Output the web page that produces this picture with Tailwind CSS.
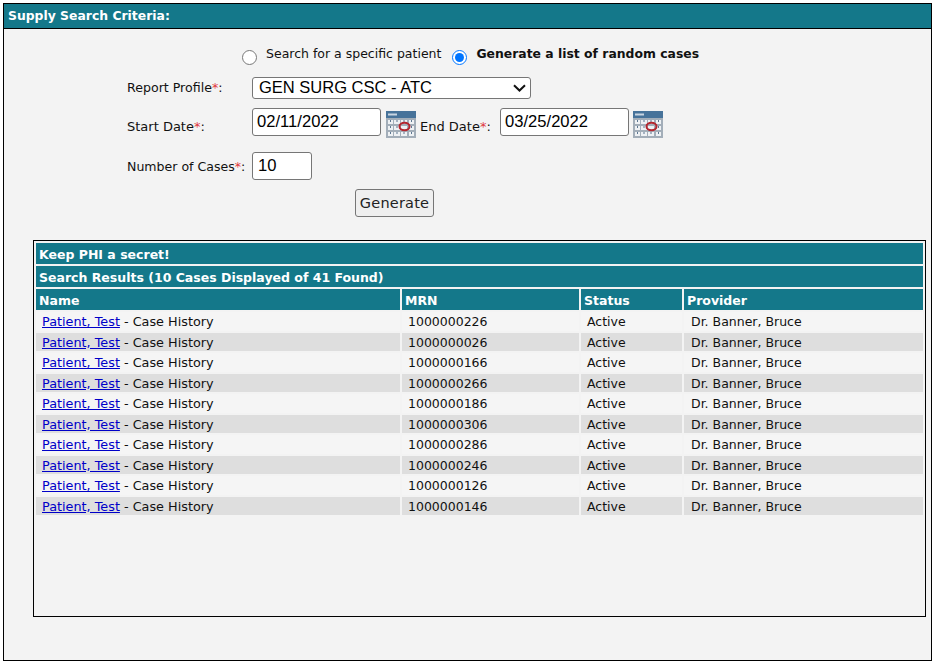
<!DOCTYPE html>
<html>
<head>
<meta charset="utf-8">
<script src="https://cdn.jsdelivr.net/npm/@tailwindcss/browser@4"></script>
</head>
<body class="bg-white font-['DejaVu_Sans',sans-serif] text-[12.5px] leading-[16px] text-[#111]">
<svg width="0" height="0" class="absolute">
  <symbol id="cal" viewBox="0 0 30 27">
    <rect width="30" height="27" fill="#a3aeb9"/>
    <rect width="30" height="7" fill="#47739a"/>
    <rect x="2" y="2.5" width="9" height="2" fill="#c9d6e2"/>
    <g fill="#eef1f4">
      <rect x="2" y="9" width="5" height="4"/><rect x="8" y="9" width="6" height="4"/><rect x="15" y="9" width="6" height="4"/><rect x="23" y="9" width="5" height="4"/>
      <rect x="2" y="15" width="5" height="4"/><rect x="8" y="15" width="6" height="4"/><rect x="15" y="15" width="6" height="4"/><rect x="23" y="15" width="5" height="4"/>
      <rect x="2" y="21" width="5" height="4"/><rect x="8" y="21" width="6" height="4"/><rect x="15" y="21" width="6" height="4"/><rect x="23" y="21" width="5" height="4"/>
    </g>
    <g fill="#5c7690">
      <rect x="4" y="9" width="1" height="2"/><rect x="10.5" y="9" width="1" height="2"/><rect x="17.5" y="9" width="1" height="2"/><rect x="25" y="9" width="1" height="2"/>
      <rect x="4" y="15" width="1" height="2"/><rect x="10.5" y="15" width="1" height="2"/><rect x="25" y="15" width="1" height="2"/>
      <rect x="4" y="21" width="1" height="2"/><rect x="10.5" y="21" width="1" height="2"/><rect x="17.5" y="21" width="1" height="2"/><rect x="25" y="21" width="1" height="2"/>
    </g>
    <ellipse cx="18.5" cy="15.5" rx="5" ry="3.8" fill="none" stroke="#b3262e" stroke-width="2"/>
  </symbol>
</svg>
<main class="ml-[3px] mt-[3px] h-[658px] w-[929px] border border-black bg-[#f3f3f3]">
  <h1 class="flex h-[25px] items-center border-b border-black bg-[#14788a] pl-[4px] text-[12.4px] font-bold text-white">Supply Search Criteria:</h1>
  <form class="h-[211px]">
    <div class="flex h-[48px] items-start pl-[238px] pt-[17px]">
      <input type="radio" name="m" class="mt-[4px] h-[15px] w-[15px]">
      <span class="ml-[9px]">Search for a specific patient</span>
      <input type="radio" name="m" checked class="ml-[11px] mt-[4px] h-[15px] w-[15px]">
      <span class="ml-[9px] text-[12.4px] font-bold">Generate a list of random cases</span>
    </div>
    <div class="flex h-[31px] items-start pl-[123px]">
      <label class="w-[125px] pt-[3px] text-[12.6px]">Report Profile<span class="text-[#e0383e]">*</span>:</label>
      <div class="relative h-[22px] w-[279px]">
        <select class="h-[22px] w-[279px] appearance-none rounded-[3px] border border-[#767676] bg-white pb-[3px] pl-[6px] font-['Liberation_Sans',sans-serif] text-[16.5px] leading-[18px] text-black">
          <option>GEN SURG CSC - ATC</option>
        </select>
        <svg class="pointer-events-none absolute right-[5px] top-[7px] h-[8px] w-[13px]" viewBox="0 0 13 8"><path d="M1 1.2 L6.5 6.5 L12 1.2" fill="none" stroke="#111" stroke-width="2"/></svg>
      </div>
    </div>
    <div class="flex h-[44px] items-start pl-[123px]">
      <label class="w-[125px] pt-[11px] text-[13px]">Start Date<span class="text-[#e0383e]">*</span>:</label>
      <input value="02/11/2022" class="h-[28px] w-[129px] rounded-[3px] border border-[#767676] bg-white pl-[4px] font-['Liberation_Sans',sans-serif] text-[16.6px] text-black">
      <svg class="ml-[5px] mt-[3px] h-[27px] w-[30px]"><use href="#cal"/></svg>
      <label class="ml-[4px] w-[80px] pt-[11px] text-[13px]">End Date<span class="text-[#e0383e]">*</span>:</label>
      <input value="03/25/2022" class="h-[28px] w-[129px] rounded-[3px] border border-[#767676] bg-white pl-[4px] font-['Liberation_Sans',sans-serif] text-[16.6px] text-black">
      <svg class="ml-[4px] mt-[3px] h-[27px] w-[30px]"><use href="#cal"/></svg>
    </div>
    <div class="flex h-[37px] items-start pl-[123px]">
      <label class="w-[125px] pt-[7px] whitespace-nowrap text-[12.55px]">Number of Cases<span class="text-[#e0383e]">*</span>:</label>
      <input value="10" class="h-[28px] w-[60px] rounded-[3px] border border-[#767676] bg-white pl-[5px] font-['Liberation_Sans',sans-serif] text-[16.6px] text-black">
    </div>
    <div class="pl-[351px]">
      <button type="button" class="h-[28px] w-[79px] rounded-[3px] border border-[#767676] bg-[#efefef] text-[14.5px] tracking-[0.2px] text-[#222]">Generate</button>
    </div>
  </form>
  <section class="ml-[29px] h-[377px] w-[893px] border border-black">
    <table class="w-[891px] table-fixed border-separate border-spacing-[2px] text-[12.5px]">
      <colgroup><col class="w-[364px]"><col class="w-[177px]"><col class="w-[101px]"><col></colgroup>
      <thead class="bg-[#14788a] text-left font-bold text-white">
        <tr class="h-[21px]"><th colspan="4" class="p-0 pl-[3px] pt-[2px] font-bold">Keep PHI a secret!</th></tr>
        <tr class="h-[21px]"><th colspan="4" class="p-0 pl-[3px] pt-[2px] font-bold">Search Results (10 Cases Displayed of 41 Found)</th></tr>
        <tr class="h-[21px]"><th class="p-0 pl-[3px] pt-[3px] font-bold">Name</th><th class="p-0 pl-[3px] pt-[3px] font-bold">MRN</th><th class="p-0 pl-[3px] pt-[3px] font-bold">Status</th><th class="p-0 pl-[3px] pt-[3px] font-bold">Provider</th></tr>
      </thead>
      <tbody>
        <tr class="h-[18.5px] bg-[#f5f5f5]"><td class="p-0 pl-[6px] pt-[2px] text-[12.8px]"><a href="#" class="text-[#0000c8] underline">Patient, Test</a> - Case History</td><td class="p-0 pl-[6px] pt-[2px]">1000000226</td><td class="p-0 pl-[6px] pt-[2px]">Active</td><td class="p-0 pl-[7px] pt-[2px]">Dr. Banner, Bruce</td></tr>
        <tr class="h-[18.5px] bg-[#dedede]"><td class="p-0 pl-[6px] pt-[2px] text-[12.8px]"><a href="#" class="text-[#0000c8] underline">Patient, Test</a> - Case History</td><td class="p-0 pl-[6px] pt-[2px]">1000000026</td><td class="p-0 pl-[6px] pt-[2px]">Active</td><td class="p-0 pl-[7px] pt-[2px]">Dr. Banner, Bruce</td></tr>
        <tr class="h-[18.5px] bg-[#f5f5f5]"><td class="p-0 pl-[6px] pt-[2px] text-[12.8px]"><a href="#" class="text-[#0000c8] underline">Patient, Test</a> - Case History</td><td class="p-0 pl-[6px] pt-[2px]">1000000166</td><td class="p-0 pl-[6px] pt-[2px]">Active</td><td class="p-0 pl-[7px] pt-[2px]">Dr. Banner, Bruce</td></tr>
        <tr class="h-[18.5px] bg-[#dedede]"><td class="p-0 pl-[6px] pt-[2px] text-[12.8px]"><a href="#" class="text-[#0000c8] underline">Patient, Test</a> - Case History</td><td class="p-0 pl-[6px] pt-[2px]">1000000266</td><td class="p-0 pl-[6px] pt-[2px]">Active</td><td class="p-0 pl-[7px] pt-[2px]">Dr. Banner, Bruce</td></tr>
        <tr class="h-[18.5px] bg-[#f5f5f5]"><td class="p-0 pl-[6px] pt-[2px] text-[12.8px]"><a href="#" class="text-[#0000c8] underline">Patient, Test</a> - Case History</td><td class="p-0 pl-[6px] pt-[2px]">1000000186</td><td class="p-0 pl-[6px] pt-[2px]">Active</td><td class="p-0 pl-[7px] pt-[2px]">Dr. Banner, Bruce</td></tr>
        <tr class="h-[18.5px] bg-[#dedede]"><td class="p-0 pl-[6px] pt-[2px] text-[12.8px]"><a href="#" class="text-[#0000c8] underline">Patient, Test</a> - Case History</td><td class="p-0 pl-[6px] pt-[2px]">1000000306</td><td class="p-0 pl-[6px] pt-[2px]">Active</td><td class="p-0 pl-[7px] pt-[2px]">Dr. Banner, Bruce</td></tr>
        <tr class="h-[18.5px] bg-[#f5f5f5]"><td class="p-0 pl-[6px] pt-[2px] text-[12.8px]"><a href="#" class="text-[#0000c8] underline">Patient, Test</a> - Case History</td><td class="p-0 pl-[6px] pt-[2px]">1000000286</td><td class="p-0 pl-[6px] pt-[2px]">Active</td><td class="p-0 pl-[7px] pt-[2px]">Dr. Banner, Bruce</td></tr>
        <tr class="h-[18.5px] bg-[#dedede]"><td class="p-0 pl-[6px] pt-[2px] text-[12.8px]"><a href="#" class="text-[#0000c8] underline">Patient, Test</a> - Case History</td><td class="p-0 pl-[6px] pt-[2px]">1000000246</td><td class="p-0 pl-[6px] pt-[2px]">Active</td><td class="p-0 pl-[7px] pt-[2px]">Dr. Banner, Bruce</td></tr>
        <tr class="h-[18.5px] bg-[#f5f5f5]"><td class="p-0 pl-[6px] pt-[2px] text-[12.8px]"><a href="#" class="text-[#0000c8] underline">Patient, Test</a> - Case History</td><td class="p-0 pl-[6px] pt-[2px]">1000000126</td><td class="p-0 pl-[6px] pt-[2px]">Active</td><td class="p-0 pl-[7px] pt-[2px]">Dr. Banner, Bruce</td></tr>
        <tr class="h-[18.5px] bg-[#dedede]"><td class="p-0 pl-[6px] pt-[2px] text-[12.8px]"><a href="#" class="text-[#0000c8] underline">Patient, Test</a> - Case History</td><td class="p-0 pl-[6px] pt-[2px]">1000000146</td><td class="p-0 pl-[6px] pt-[2px]">Active</td><td class="p-0 pl-[7px] pt-[2px]">Dr. Banner, Bruce</td></tr>
      </tbody>
    </table>
  </section>
</main>
</body>
</html>
